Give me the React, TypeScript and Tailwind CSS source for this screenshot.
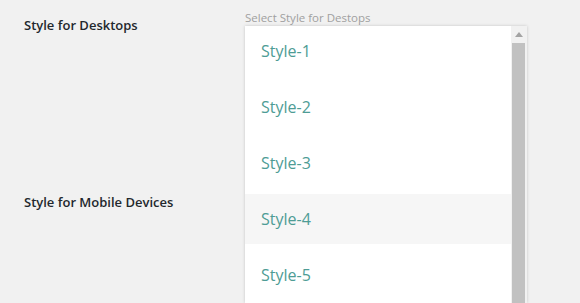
const styles = ["Style-1", "Style-2", "Style-3", "Style-4", "Style-5"];

function StyleList() {
  return (
    <div className="flex w-[282px] h-[300px] bg-white shadow-[0_0_3px_rgba(0,0,0,0.18)] overflow-hidden">
      <ul className="flex-1 flex flex-col gap-[6px]">
        {styles.map((s) => (
          <li
            key={s}
            className={
              "h-[50px] shrink-0 flex items-center pl-[16px] text-[16px] text-[#4e9c95] " +
              (s === "Style-4" ? "bg-[#f6f6f6]" : "")
            }
          >
            {s}
          </li>
        ))}
      </ul>
      <div className="w-[16px] flex flex-col items-center bg-[#f1f1f1] pl-[1px] pr-[2px]">
        <div className="h-[17px] flex items-center justify-center">
          <svg width="8" height="5" viewBox="0 0 8 5">
            <path d="M0 5 L4 0 L8 5 Z" fill="#a3a3a3" />
          </svg>
        </div>
        <div className="w-full flex-1 bg-[#c1c1c1]" />
      </div>
    </div>
  );
}

export default function App() {
  return (
    <div className="h-[303px] w-[580px] overflow-hidden bg-[#f1f1f1] font-['Open_Sans',sans-serif] flex">
      <div className="w-[245px] shrink-0 pl-[24px] pt-[16px] flex flex-col gap-[157px]">
        <div className="text-[13px] font-semibold text-[#23282d]">Style for Desktops</div>
        <div className="text-[13px] font-semibold text-[#23282d]">Style for Mobile Devices</div>
      </div>
      <div className="pt-[10px] flex flex-col">
        <div className="text-[11.5px] leading-[16px] text-[#a0a0a0]">Select Style for Destops</div>
        <StyleList />
      </div>
    </div>
  );
}
